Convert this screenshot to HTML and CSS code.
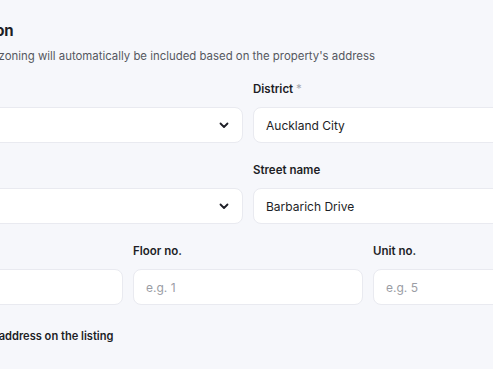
FILE: index.html
```html
<!DOCTYPE html>
<html>
<head>
<meta charset="utf-8">
<link rel="stylesheet" href="styles.css">
</head>
<body>
<div class="page">
  <section class="form">
    <h2 class="title">Property location</h2>
    <p class="subtitle">Its district, city and zoning will automatically be included based on the property's address</p>

    <div class="grid two">
      <div class="field">
        <label class="label">Region <span class="req">*</span></label>
        <div class="control select"><span class="value">Auckland</span>
          <svg class="chev" width="10" height="7" viewBox="0 0 10 7"><path d="M1.5 1.5 L5 5 L8.5 1.5" fill="none" stroke="#1d1e26" stroke-width="1.8" stroke-linecap="round" stroke-linejoin="round"/></svg>
        </div>
      </div>
      <div class="field">
        <label class="label">District <span class="req">*</span></label>
        <div class="control"><span class="value">Auckland City</span></div>
      </div>
    </div>

    <div class="grid two">
      <div class="field">
        <label class="label">Suburb <span class="req">*</span></label>
        <div class="control select"><span class="value">Penrose</span>
          <svg class="chev" width="10" height="7" viewBox="0 0 10 7"><path d="M1.5 1.5 L5 5 L8.5 1.5" fill="none" stroke="#1d1e26" stroke-width="1.8" stroke-linecap="round" stroke-linejoin="round"/></svg>
        </div>
      </div>
      <div class="field">
        <label class="label">Street name</label>
        <div class="control"><span class="value">Barbarich Drive</span></div>
      </div>
    </div>

    <div class="grid three">
      <div class="field">
        <label class="label">Street no.</label>
        <div class="control"><span class="value">12</span></div>
      </div>
      <div class="field">
        <label class="label">Floor no.</label>
        <div class="control"><span class="placeholder">e.g. 1</span></div>
      </div>
      <div class="field">
        <label class="label">Unit no.</label>
        <div class="control"><span class="placeholder">e.g. 5</span></div>
      </div>
    </div>

    <label class="check">
      <span class="box"></span>
      <span class="check-text">Hide the exact address on the listing</span>
    </label>
  </section>
</div>
</body>
</html>
```
FILE: styles.css
```css
html, body {
  margin: 0;
  padding: 0;
  background: #f6f7fb;
  overflow: hidden;
}
body {
  font-family: Inter, "Noto Sans", sans-serif;
  color: #1d1e26;
}
.page {
  width: 493px;
  height: 369px;
  overflow: hidden;
}
.form {
  margin-left: -107px;
  width: 710px;
  padding-top: 21px;
}
.title {
  margin: 0;
  font-size: 15px;
  line-height: 20px;
  font-weight: 700;
  letter-spacing: -0.4px;
}
.subtitle {
  margin: 7px 0 0;
  font-size: 11.4px;
  line-height: 16px;
  color: #55575f;
  white-space: nowrap;
}
.grid {
  display: grid;
  column-gap: 10px;
}
.grid.two {
  grid-template-columns: 1fr 1fr;
  margin-top: 19px;
}
.grid.two:first-of-type {
  margin-top: 17px;
}
.grid.three {
  grid-template-columns: 1fr 1fr 1fr;
  margin-top: 19px;
}
.field {
  display: flex;
  flex-direction: column;
  gap: 10px;
}
.label {
  font-size: 11.5px;
  line-height: 16px;
  font-weight: 600;
  color: #1d1e26;
}
.req {
  color: #a5a7ae;
  font-weight: 400;
}
.control {
  height: 36px;
  box-sizing: border-box;
  background: #ffffff;
  border: 1px solid #e9eaf0;
  border-radius: 8px;
  display: flex;
  align-items: center;
  padding: 0 13px 0 12px;
  font-size: 12px;
}
.select {
  justify-content: space-between;
}
.placeholder {
  color: #9b9da5;
}
.check {
  display: flex;
  align-items: center;
  gap: 8px;
  margin-top: 21px;
  font-size: 11.1px;
  font-weight: 600;
  line-height: 20px;
}
.box {
  width: 18px;
  height: 18px;
  box-sizing: border-box;
  border: 1px solid #c9cbd3;
  border-radius: 4px;
  background: #fff;
}
```
